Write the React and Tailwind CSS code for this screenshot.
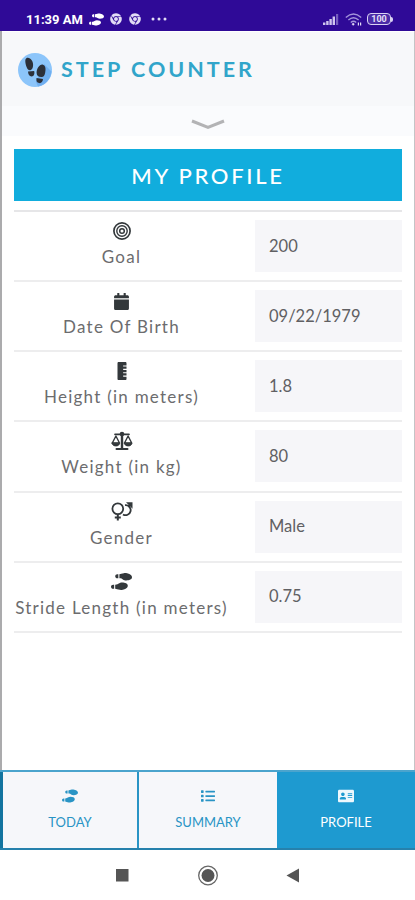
import { FaCalendar, FaRulerVertical, FaShoePrints, FaList, FaAddressCard, FaChrome } from 'react-icons/fa'

function GoalIcon({ size }) {
  return (
    <svg width={size} height={size} viewBox="0 0 18 18" fill="none" stroke="currentColor">
      <circle cx="9" cy="9" r="8.1" strokeWidth="1.7" />
      <circle cx="9" cy="9" r="5.2" strokeWidth="1.4" />
      <circle cx="9" cy="9" r="2.3" strokeWidth="1.5" />
    </svg>
  )
}

function ScaleIcon({ size }) {
  return (
    <svg width={size} height={size} viewBox="0 0 22 22" fill="none" stroke="currentColor" strokeWidth="1.4" strokeLinejoin="round" strokeLinecap="round">
      <path d="M11 3.5V18.5" strokeWidth="2.4" />
      <path d="M4 4.300H18" strokeWidth="1.7" />
      <path d="M5.500 18.900H16.500" strokeWidth="2" />
      <circle cx="11" cy="4" r="1.6" fill="currentColor" />
      <path d="M4.900 6L1.300 13H8.500Z" />
      <path d="M17.100 6L13.500 13H20.700Z" />
      <path d="M1 13.200H8.700C8.200 17 1.500 17 1 13.200ZM13.300 13.200H21C20.500 17 13.800 17 13.300 13.200Z" fill="currentColor" strokeWidth=".8" />
    </svg>
  )
}

function GenderIcon({ size }) {
  return (
    <svg width={size} height={size} viewBox="0 0 22 22" fill="none" stroke="currentColor" strokeWidth="1.8">
      <circle cx="6.8" cy="7.800" r="5.400" />
      <path d="M6.800 13.200V19.600M3.800 16.600H9.800" strokeWidth="2" />
      <path d="M14 4.200A5 5 0 1 1 12 13.400" />
      <path d="M17.400 5.600L19.500 3.500" strokeWidth="2.200" />
      <path d="M15 1.300H21.500V7.800Z" fill="currentColor" stroke="none" />
    </svg>
  )
}

const fields = [
  { label: 'Goal', value: '200', icon: GoalIcon, size: 18 },
  { label: 'Date Of Birth', value: '09/22/1979', icon: FaCalendar, size: 17 },
  { label: 'Height (in meters)', value: '1.8', icon: FaRulerVertical, size: 18 },
  { label: 'Weight (in kg)', value: '80', icon: ScaleIcon, size: 22 },
  { label: 'Gender', value: 'Male', icon: GenderIcon, size: 22 },
  { label: 'Stride Length (in meters)', value: '0.75', icon: FaShoePrints, size: 21 },
]

function StatusBar() {
  return (
    <div className="h-[31px] bg-[#2f0a97] flex items-center pl-[26px] pr-[22px] pt-[7px] text-white">
      <span className="font-['Roboto'] font-bold text-[13px] leading-none w-[58px] whitespace-nowrap">11:39 AM</span>
      <FaShoePrints size={15} className="ml-[5px] text-white" />
      <FaChrome size={12} className="ml-[6px] text-[#e2dcf5]" />
      <FaChrome size={12} className="ml-[7px] text-[#e2dcf5]" />
      <svg width="16" height="4" viewBox="0 0 16 4" className="ml-[10px]" fill="#e2dcf5">
        <circle cx="2" cy="2" r="1.5" />
        <circle cx="8" cy="2" r="1.5" />
        <circle cx="14" cy="2" r="1.5" />
      </svg>
      <svg width="16" height="13" viewBox="0 0 16 13" className="ml-auto" fill="#cfc5ee">
        <rect x="0" y="9.5" width="2.4" height="2.5" />
        <rect x="3.2" y="8" width="2.4" height="4" />
        <rect x="6.4" y="6" width="2.4" height="6" />
        <rect x="9.6" y="3.5" width="2.4" height="8.5" />
        <rect x="13" y="1" width="2.2" height="11" opacity=".45" />
      </svg>
      <svg width="17" height="13" viewBox="0 0 17 13" className="ml-[6px]" fill="none" stroke="#a394db" strokeWidth="1.4">
        <path d="M0.8 4.6 Q8.5 -2.4 16.2 4.6" />
        <path d="M3.4 7 Q8.5 2.4 13.6 7" />
        <path d="M5.8 9.4 Q8.5 7 11.2 9.4" />
        <circle cx="8.2" cy="11.2" r="1" fill="#e2dcf5" stroke="#e2dcf5" strokeWidth=".5" />
        <path d="M13.4 9.5V12.5M15.6 9.5V12.5" stroke="#e2dcf5" strokeWidth="1.2" />
      </svg>
      <div className="ml-[5px] w-[24px] h-[12px] rounded-[4px] border-[1.5px] border-[#d9d2f2] bg-[#4a2ba8] flex items-center justify-center">
        <span className="font-['Roboto'] font-bold text-[9px] leading-none text-[#e6e0f8]">100</span>
      </div>
      <div className="w-[2px] h-[5px] rounded-r bg-[#d9d2f2]" />
    </div>
  )
}

function Logo() {
  return (
    <svg width="34" height="34" viewBox="0 0 34 34" className="shrink-0">
      <circle cx="17" cy="17" r="17" fill="#8cc5fa" />
      <path d="M26 11 L33.5 18.5 A17 17 0 0 1 20 33.6 L18 29 Z" fill="#70aff0" />
      <g fill="#2c3039">
        <path d="M9 4.8 C12.5 4 15.3 8.5 15.1 12 C15 14.8 14.2 16.8 12.4 17.2 C10.4 17.5 9.2 16 8.6 14 C7.7 11.5 6 6 9 4.8Z" />
        <path d="M10 18.6 L16.2 18 C16.8 21 15.9 23.4 13.6 23.5 C11.2 23.5 10.2 21.7 10 18.6Z" />
        <path d="M25 11.7 C28 12.5 27.8 17 27.1 20 C26.5 22.9 25.6 24.3 23.3 24.1 C20.4 23.9 18.7 22.7 18.6 20 C18.5 15.8 21.6 10.9 25 11.7Z" />
        <path d="M18.5 25 L25 26 C24.7 29 23.3 30.4 21.1 30.1 C18.7 29.7 18 27.9 18.5 25Z" />
      </g>
    </svg>
  )
}

function Header() {
  return (
    <header>
      <div className="h-[74px] mt-px bg-[#f7f8fa] pl-[16px] pt-px flex items-center">
        <Logo />
        <h1 className="ml-[9px] pt-px text-[21.5px] font-bold leading-none tracking-[3px] text-[#31a5ca] whitespace-nowrap">
          STEP COUNTER
        </h1>
      </div>
      <div className="h-[30px] bg-[#fafbfd] flex justify-center pt-[13px]">
        <svg width="34" height="11" viewBox="0 0 34 11" fill="none" stroke="#b3b3b5" strokeWidth="3">
          <path d="M1 2 L17 8.5 L33 2" />
        </svg>
      </div>
    </header>
  )
}

function FieldRow({ field }) {
  const Icon = field.icon

  return (
    <div className="h-[70.15px] border-b-2 border-[#ededee] flex items-start">
      <div className="w-[215px] pt-[10px] flex flex-col items-center">
        <div className="h-[18px] flex items-center text-[#33383b]">
          <Icon size={field.size} />
        </div>
        <span className="mt-[5px] text-[17px] leading-[24px] tracking-[1.25px] text-[#6c6c6e] whitespace-nowrap">
          {field.label}
        </span>
      </div>
      <div className="ml-auto mt-[8px] w-[147px] h-[52px] bg-[#f6f6f9] pl-[14px] flex items-center text-[16.5px] text-[#606063]">
        {field.value}
      </div>
    </div>
  )
}

function TabBar() {
  return (
    <nav className="h-[80px] flex border-y-2 border-t-[#4ba4cd] border-b-[#2681ac] text-[13px] text-[#2994c5]">
      <div className="w-[139px] border-l-[3px] border-l-[#13749f] border-r-2 border-r-[#2994c5] bg-[#f6f7fa] flex flex-col items-center pt-[16px]">
        <FaShoePrints size={16} />
        <span className="mt-[9px] leading-[18px]">TODAY</span>
      </div>
      <div className="w-[138px] bg-[#f6f7fa] flex flex-col items-center pt-[17px]">
        <FaList size={14} />
        <span className="mt-[10px] leading-[18px]">SUMMARY</span>
      </div>
      <div className="flex-1 bg-[#1e9ad0] text-white flex flex-col items-center pt-[16px]">
        <FaAddressCard size={16} className="text-[#eef8fd]" />
        <span className="mt-[9px] leading-[18px]">PROFILE</span>
      </div>
    </nav>
  )
}

function SystemNav() {
  return (
    <div className="h-[50px] bg-white flex items-center justify-center">
      <svg width="186" height="22" viewBox="0 0 186 22">
        <rect x="1" y="5" width="12.5" height="12.5" fill="#555" />
        <circle cx="93" cy="11.5" r="9.3" fill="none" stroke="#666" strokeWidth="1.3" />
        <circle cx="93" cy="11.5" r="6.5" fill="#555" />
        <path d="M171.500 11.5 L184 4.5 V18.5 Z" fill="#555" />
      </svg>
    </div>
  )
}

export default function App() {
  return (
    <div className="w-[415px] h-[900px] overflow-hidden bg-white flex flex-col font-['Lato',sans-serif]">
      <StatusBar />
      <div className="flex-1 border-l-2 border-l-[#ababad] border-r border-r-[#c4c4c6]">
        <Header />
        <main className="px-[12px] pt-[13px]">
          <h2 className="h-[52px] bg-[#11addd] text-white text-[22px] font-medium tracking-[2.7px] flex items-center justify-center">
            MY PROFILE
          </h2>
          <div className="mt-[9px] border-t-2 border-[#e6e6e8]">
            {fields.map((f) => (
              <FieldRow key={f.label} field={f} />
            ))}
          </div>
        </main>
      </div>
      <TabBar />
      <SystemNav />
    </div>
  )
}
